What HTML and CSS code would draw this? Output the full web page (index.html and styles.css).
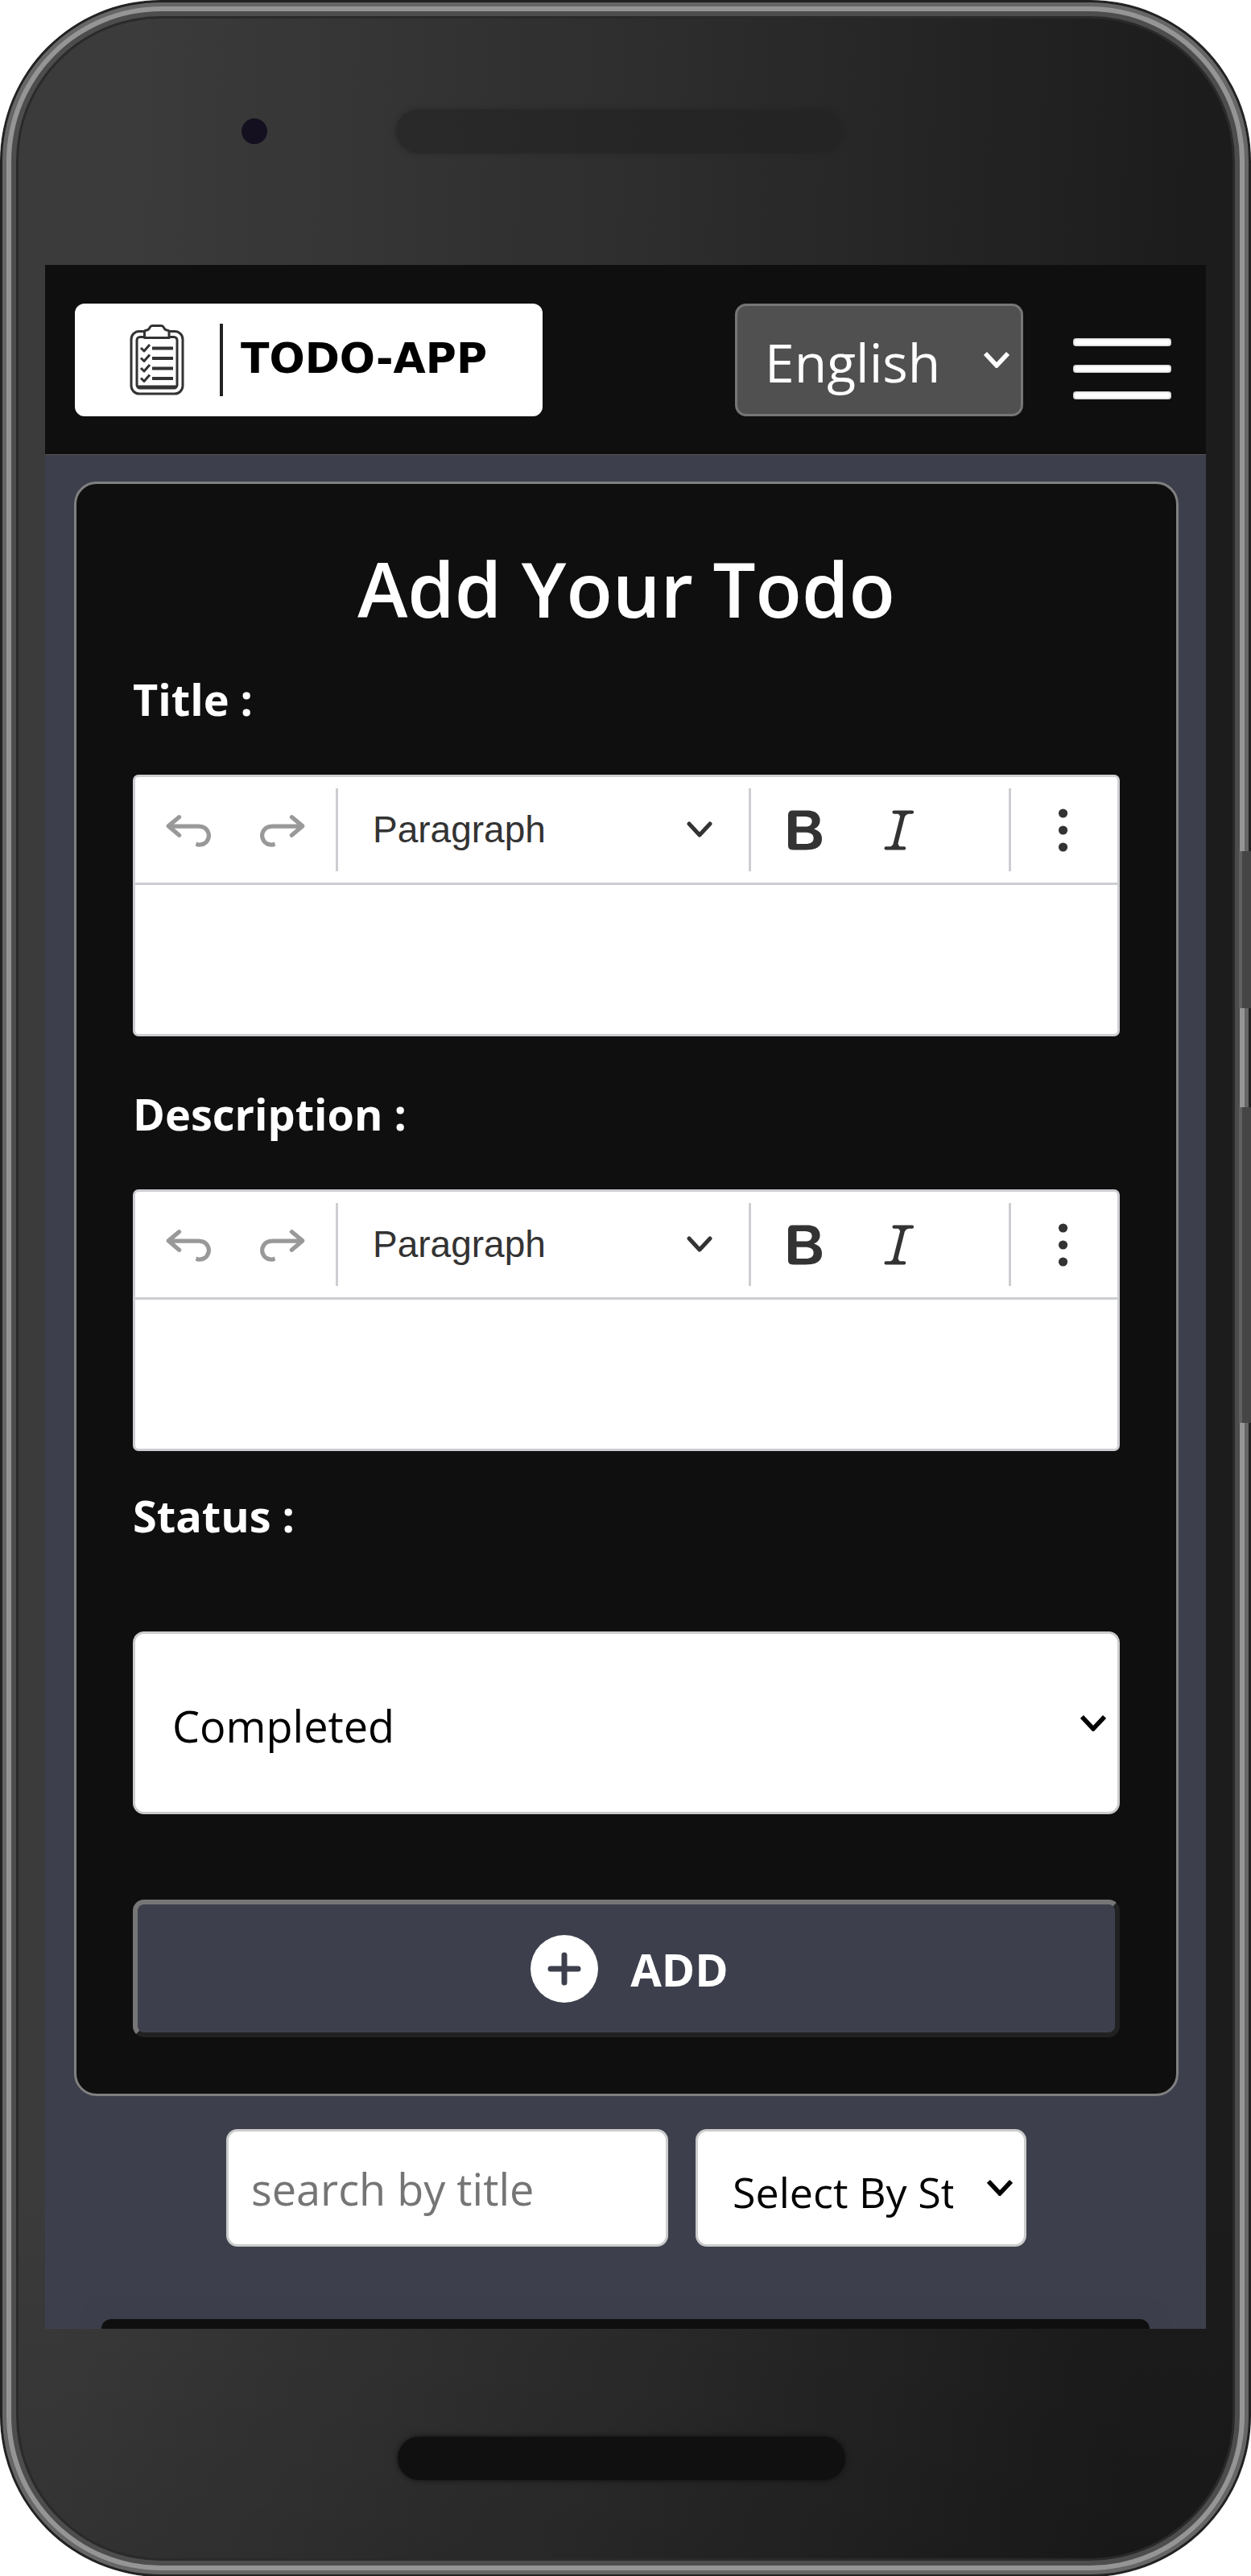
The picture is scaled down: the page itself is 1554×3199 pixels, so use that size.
FILE: index.html
```html
<!DOCTYPE html>
<html lang="en">
<head>
<meta charset="utf-8">
<meta name="viewport" content="width=device-width, initial-scale=1">
<title>Todo App</title>
<link rel="stylesheet" href="styles.css">
</head>
<body>
<svg class="sprite" aria-hidden="true">
  <symbol id="undo" viewBox="0 0 20 20"><path d="m5.042 9.367 2.189 1.837a.75.75 0 0 1-.965 1.149l-3.788-3.18a.747.747 0 0 1-.21-.284.75.75 0 0 1 .17-.945L6.23 4.762a.75.75 0 1 1 .964 1.15L4.863 7.866h8.917A.75.75 0 0 1 14 7.9a4 4 0 1 1-1.477 7.718l.344-1.489a2.5 2.5 0 1 0 1.094-4.73l.008-.032H5.042z"/></symbol>
  <symbol id="redo" viewBox="0 0 20 20"><path d="m14.958 9.367-2.189 1.837a.75.75 0 0 0 .965 1.149l3.788-3.18a.747.747 0 0 0 .21-.284.75.75 0 0 0-.17-.945L13.77 4.762a.75.75 0 1 0-.964 1.15l2.331 1.955H6.22A.75.75 0 0 0 6 7.9a4 4 0 1 0 1.477 7.718l-.344-1.489A2.5 2.5 0 1 1 6.039 9.4l-.008-.032h8.927z"/></symbol>
  <symbol id="bold" viewBox="0 0 20 20"><path d="M10.187 17H5.773c-.637 0-1.092-.138-1.364-.415-.273-.277-.409-.718-.409-1.323V4.738c0-.617.14-1.062.419-1.332.279-.27.73-.406 1.354-.406h4.68c.69 0 1.288.041 1.793.124.506.083.96.242 1.36.478.341.197.644.447.906.75a3.262 3.262 0 0 1 .808 2.162c0 1.401-.722 2.426-2.167 3.075C15.05 10.175 16 11.315 16 13.01a3.756 3.756 0 0 1-2.296 3.504 6.1 6.1 0 0 1-1.517.377c-.571.073-1.238.11-2 .11zm-.217-6.217H7v4.087h3.069c1.977 0 2.965-.69 2.965-2.072 0-.707-.256-1.22-.768-1.537-.512-.319-1.277-.478-2.296-.478zM7 5.13v3.619h2.606c.729 0 1.292-.067 1.69-.2a1.6 1.6 0 0 0 .91-.765c.165-.267.247-.566.247-.897 0-.707-.26-1.176-.778-1.409-.519-.232-1.31-.348-2.375-.348H7z"/></symbol>
  <symbol id="italic" viewBox="0 0 20 20"><path d="m9.586 14.633.021.004c-.036.335.095.655.393.962.082.083.173.15.274.201h1.474a.6.6 0 1 1 0 1.2H5.304a.6.6 0 0 1 0-1.2h1.15c.474-.07.809-.182 1.005-.334.157-.122.291-.32.404-.597l2.416-9.55a1.053 1.053 0 0 0-.281-.823 1.12 1.12 0 0 0-.442-.296H8.15a.6.6 0 0 1 0-1.2h6.443a.6.6 0 1 1 0 1.2h-1.195c-.376.056-.65.155-.823.296-.215.175-.423.439-.623.79l-2.366 9.347z"/></symbol>
  <symbol id="more" viewBox="0 0 20 20"><circle cx="9.300" cy="4" r="1.600"/><circle cx="9.300" cy="10" r="1.600"/><circle cx="9.300" cy="16" r="1.600"/></symbol>
  <symbol id="caret" viewBox="0 0 32 20"><path d="M2 2l14 15L30 2" fill="none" stroke="currentColor" stroke-width="5.500"/></symbol>
  <symbol id="caret-round" viewBox="0 0 32 20"><path d="M3 3l13 14L29 3" fill="none" stroke="currentColor" stroke-width="5" stroke-linecap="round" stroke-linejoin="round"/></symbol>
</svg>

<div class="phone">
  <div class="bezel bezel-top">
    <span class="camera"></span>
    <span class="speaker"></span>
  </div>

  <div class="screen">
    <header class="topbar">
      <a class="logo" href="#" aria-label="Todo App home">
        <svg class="logo-mark" viewBox="0 0 68 88" fill="none" stroke="#333" stroke-width="3" stroke-linejoin="round" aria-hidden="true">
          <path d="M18 8.500H12a10 10 0 0 0-10 10V76a10 10 0 0 0 10 10H56a10 10 0 0 0 10-10V18.500a10 10 0 0 0-10-10H50"/>
          <path d="M18 15.500H13a4 4 0 0 0-4 4V75a4 4 0 0 0 4 4H55a4 4 0 0 0 4-4V19.500a4 4 0 0 0-4-4H50"/>
          <path d="M18.500 16.500V9q0-2 3-2 3-1 4-4 1-1.500 3-1.500H39q2 0 3 1.500 1 3 4 4 3 0 3 2V16.500z"/>
          <path d="M10 77.500H58" stroke-width="4"/>
          <path d="M14 29l4 4 7-8M14 41.500l4 4 7-8M14 54l4 4 7-8M14 66.500l4 4 7-8"/>
          <path d="M28 29.500H54M28 42H54M28 54.500H54M28 67H54" stroke-width="4"/>
        </svg>
        <span class="logo-rule"></span>
        <span class="logo-text">TODO-APP</span>
      </a>
      <div class="select language">
        <select aria-label="Language"><option>English</option></select>
        <svg class="caret" aria-hidden="true"><use href="#caret"/></svg>
      </div>
      <button class="menu" type="button" aria-label="Menu">
        <span></span><span></span><span></span>
      </button>
    </header>

    <main class="content">
      <form class="card">
        <h1>Add Your Todo</h1>

        <label for="title">Title :</label>
        <div class="editor">
          <div class="toolbar" role="toolbar" aria-label="Title formatting">
            <button class="tool" type="button" aria-label="Undo" disabled><svg><use href="#undo"/></svg></button>
            <button class="tool" type="button" aria-label="Redo" disabled><svg><use href="#redo"/></svg></button>
            <span class="sep"></span>
            <button class="heading" type="button">Paragraph<svg class="caret" aria-hidden="true"><use href="#caret-round"/></svg></button>
            <span class="sep"></span>
            <button class="tool" type="button" aria-label="Bold"><svg><use href="#bold"/></svg></button>
            <button class="tool" type="button" aria-label="Italic"><svg><use href="#italic"/></svg></button>
            <span class="sep sep-last"></span>
            <button class="tool" type="button" aria-label="Show more items"><svg><use href="#more"/></svg></button>
          </div>
          <textarea id="title"></textarea>
        </div>

        <label for="description">Description :</label>
        <div class="editor">
          <div class="toolbar" role="toolbar" aria-label="Description formatting">
            <button class="tool" type="button" aria-label="Undo" disabled><svg><use href="#undo"/></svg></button>
            <button class="tool" type="button" aria-label="Redo" disabled><svg><use href="#redo"/></svg></button>
            <span class="sep"></span>
            <button class="heading" type="button">Paragraph<svg class="caret" aria-hidden="true"><use href="#caret-round"/></svg></button>
            <span class="sep"></span>
            <button class="tool" type="button" aria-label="Bold"><svg><use href="#bold"/></svg></button>
            <button class="tool" type="button" aria-label="Italic"><svg><use href="#italic"/></svg></button>
            <span class="sep sep-last"></span>
            <button class="tool" type="button" aria-label="Show more items"><svg><use href="#more"/></svg></button>
          </div>
          <textarea id="description"></textarea>
        </div>

        <label class="status-label" for="status">Status :</label>
        <div class="select status">
          <select id="status"><option>Completed</option></select>
          <svg class="caret" aria-hidden="true"><use href="#caret"/></svg>
        </div>

        <button class="add" type="submit">
          <svg class="plus" viewBox="0 0 84 84" aria-hidden="true"><circle cx="42" cy="42" r="42" fill="#fff"/><path d="M42 25V59M25 42H59" stroke="#3d404c" stroke-width="7" stroke-linecap="round"/></svg>
          ADD
        </button>
      </form>

      <div class="filters">
        <input class="search" type="text" placeholder="search by title" aria-label="Search by title">
        <div class="select filter">
          <select aria-label="Filter by status"><option>Select By Status</option></select>
          <svg class="caret" aria-hidden="true"><use href="#caret"/></svg>
        </div>
      </div>

      <section class="todos" aria-label="Todos"></section>
    </main>
  </div>

  <div class="bezel bezel-bottom">
    <span class="speaker speaker-dark"></span>
  </div>
  <span class="side-key power"></span>
  <span class="side-key volume"></span>
</div>
</body>
</html>
```
FILE: styles.css
```css
*,
*::before,
*::after {
  box-sizing: border-box;
}

body {
  margin: 0;
  background: #fff;
  font-family: "Open Sans", "Noto Sans", sans-serif;
}

button,
input,
select,
textarea {
  font: inherit;
  margin: 0;
}

.sprite {
  display: none;
}

/* Phone shell */
.phone {
  position: relative;
  display: flex;
  flex-direction: column;
  min-height: 100vh;
  padding: 0 56px;
  overflow: hidden;
  border-radius: 200px;
  background:
    linear-gradient(180deg, transparent 85%, rgba(0, 0, 0, 0.15)),
    linear-gradient(92deg, #3b3b3b 10%, #2d2d2d 50%, #1c1c1c 90%);
  box-shadow:
    inset 0 0 0 3px #222,
    inset 0 0 0 8px #666,
    inset 0 0 0 14px #959595,
    inset 0 0 0 20px #4d4d4d,
    inset 0 0 0 23px #2a2a2a;
}

.bezel {
  display: flex;
  align-items: center;
}

.bezel-top {
  height: 329px;
  padding: 0 0 4px 244px;
  gap: 160px;
}

.bezel-bottom {
  height: 308px;
  padding: 14px 0 0 438px;
}

.camera {
  width: 32px;
  height: 32px;
  border-radius: 50%;
  background: #141020;
}

.speaker {
  width: 556px;
  height: 54px;
  border-radius: 27px;
  background: linear-gradient(90deg, #292929, #252525 60%, #242424);
  box-shadow: 0 0 6px rgba(36, 36, 36, 0.8);
}

.speaker-dark {
  background: #101010;
  box-shadow: 0 0 6px #101010;
}

.side-key {
  position: absolute;
  right: 0;
  width: 15px;
  border-left: 4px solid #606060;
  background: #454545;
}

.power {
  top: 1057px;
  height: 195px;
}

.volume {
  top: 1375px;
  height: 392px;
}

/* App screen */
.screen {
  flex: 1;
  display: flex;
  flex-direction: column;
  overflow: hidden;
  background: #3d404c;
}

.topbar {
  display: flex;
  align-items: center;
  padding: 48px 37px 47px;
  background: #0f0f0f;
  border-bottom: 1px solid #555;
}

.logo {
  display: flex;
  align-items: center;
  width: 581px;
  height: 140px;
  margin-right: auto;
  padding-left: 68px;
  border-radius: 12px;
  background: #fff;
  color: #000;
  text-decoration: none;
}

.logo-mark {
  width: 68px;
  height: 88px;
}

.logo-rule {
  width: 4px;
  height: 90px;
  margin: 0 22px 0 44px;
  background: #222;
}

.logo-text {
  padding-bottom: 4px;
  font-family: "DejaVu Sans", sans-serif;
  font-size: 52px;
  font-weight: 700;
  line-height: 60px;
}

.select {
  display: grid;
  align-items: center;
  color: #000;
}

.select select {
  grid-area: 1 / 1;
  width: 100%;
  height: 100%;
  appearance: none;
  border: 3px solid #ccc;
  border-radius: 14px;
  background: #fff;
  color: inherit;
  font-size: 54px;
}

.caret {
  width: 32px;
  height: 20px;
}

.select .caret {
  grid-area: 1 / 1;
  justify-self: end;
  margin-right: 17px;
  pointer-events: none;
}

.language {
  width: 358px;
  height: 140px;
  color: #fff;
}

.language select {
  padding: 4px 60px 0 34px;
  border-color: #767676;
  background: #505050;
  font-size: 66px;
}

.menu {
  display: flex;
  flex-direction: column;
  gap: 23px;
  width: 122px;
  margin: 22px 6px 0 62px;
  padding: 0;
  border: 0;
  background: none;
}

.menu span {
  height: 10px;
  border-radius: 4px;
  background: #fff;
  box-shadow: inset 0 0 3px #888;
}

.content {
  padding: 33px 34px 0 36px;
}

.card {
  display: flex;
  flex-direction: column;
  padding: 70px;
  border: 3px solid #808080;
  border-radius: 28px;
  background: #0f0f0f;
  color: #fff;
}

.card h1 {
  margin: 0 0 39px;
  font-size: 94px;
  font-weight: 600;
  line-height: 120px;
  text-align: center;
}

.card label {
  font-size: 54px;
  font-weight: 700;
  line-height: 76px;
}

.editor {
  display: flex;
  flex-direction: column;
  margin: 56px 0 58px;
  border: 3px solid #ccced1;
  border-radius: 7px;
  background: #fff;
}

.toolbar {
  display: flex;
  align-items: center;
  gap: 6px;
  height: 134px;
  padding: 0 10px;
  border-bottom: 3px solid #ccced1;
}

.tool {
  display: grid;
  place-items: center;
  width: 111px;
  height: 111px;
  padding: 0;
  border: 0;
  background: none;
  fill: #333;
}

.tool:disabled {
  fill: #999;
}

.tool svg {
  width: 70px;
  height: 70px;
}

.sep {
  align-self: stretch;
  width: 3px;
  margin: 14px 5px;
  background: #ccced1;
}

.sep-last {
  margin-left: auto;
}

.heading {
  display: flex;
  align-items: center;
  justify-content: space-between;
  width: 488px;
  height: 111px;
  padding: 0 34px 2px 32px;
  border: 0;
  background: none;
  color: #333;
  font-family: "Liberation Sans", Arial, sans-serif;
  font-size: 46px;
}

.editor textarea {
  height: 185px;
  padding: 20px 30px;
  border: 0;
  border-radius: 7px;
  outline: 0;
  resize: none;
  background: #fff;
  font-size: 46px;
}

.card .status-label {
  margin-top: -16px;
}

.status {
  height: 227px;
  margin: 106px 0;
}

.status select {
  padding: 6px 90px 0 46px;
}

.add {
  display: flex;
  align-items: center;
  justify-content: center;
  gap: 40px;
  height: 171px;
  padding: 0 0 0 8px;
  border: 6px solid;
  border-color: #767676 #212121 #212121 #767676;
  border-radius: 14px;
  background: #3d404c;
  color: #fff;
  font-size: 56px;
  font-weight: 700;
}

.plus {
  width: 84px;
  height: 84px;
}

.filters {
  display: flex;
  justify-content: center;
  gap: 34px;
  margin-top: 41px;
}

.search {
  width: 549px;
  height: 146px;
  padding: 2px 28px 0;
  border: 3px solid #ccc;
  border-radius: 14px;
  background: #fff;
  font-size: 54px;
}

.search::placeholder {
  color: #757575;
  opacity: 1;
}

.filter {
  width: 411px;
  height: 146px;
}

.filter select {
  padding: 8px 88px 0 43px;
  font-size: 52px;
}

.todos {
  height: 12px;
  margin: 90px 36px 0 34px;
  border-radius: 14px 14px 0 0;
  background: #0f0f0f;
  box-shadow: 0 0 24px rgba(60, 50, 70, 0.6);
}
```
